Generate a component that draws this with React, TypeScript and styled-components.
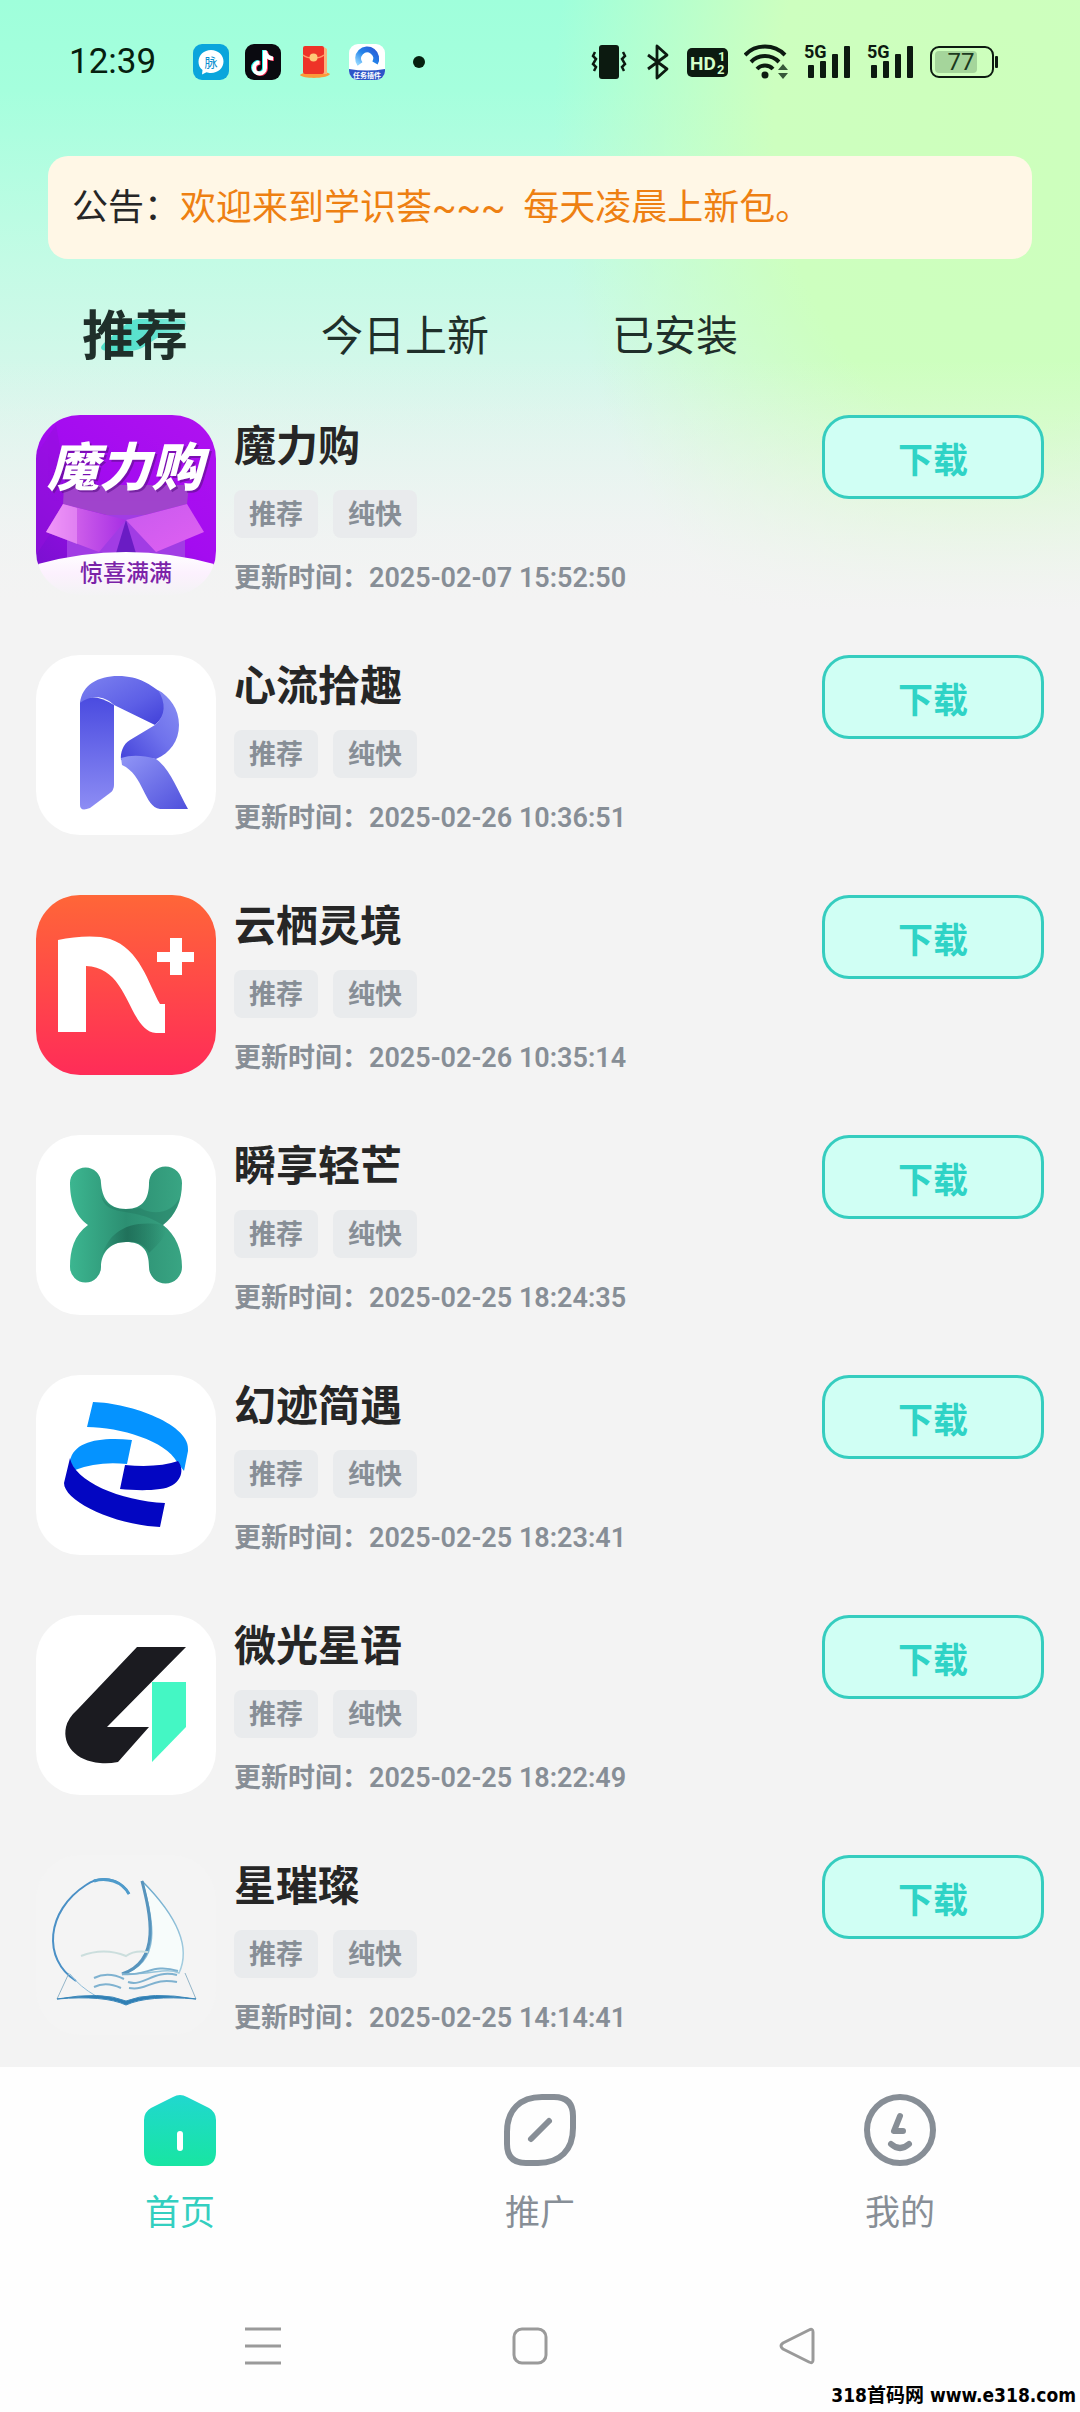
import React, { useState } from "react";
import styled, { createGlobalStyle } from "styled-components";

const GlobalStyle = createGlobalStyle`
  *, *::before, *::after { box-sizing: border-box; }
  body {
    margin: 0;
    background: #f3f3f3;
    font-family: Roboto, "Noto Sans CJK SC", sans-serif;
    color: #262626;
  }
  button { font-family: inherit; padding: 0; border: 0; background: none; color: inherit; cursor: pointer; }
  a { color: inherit; text-decoration: none; }
  svg { display: block; }
`;

const Screen = styled.div`
  position: relative;
  min-height: 100vh;
  display: flex;
  flex-direction: column;
  background:
    linear-gradient(180deg, rgba(243, 243, 243, 0) 0, rgba(243, 243, 243, 0) 360px, rgba(243, 243, 243, 0.4) 470px, #f3f3f3 610px),
    radial-gradient(ellipse 440px 620px at 92% 120px, #cdffbc 0, #cdffbf 50%, rgba(205, 255, 200, 0) 100%),
    linear-gradient(180deg, #9fffdb 0, #a5ffdd 90px, #c3fbe5 260px, #d6f7eb 390px, #f3f3f3 600px);
`;

/* ---------- status bar ---------- */

const StatusBar = styled.header`
  display: flex;
  align-items: center;
  justify-content: space-between;
  height: 124px;
  padding: 0 82px 0 69px;
  color: #06200f;
`;

const StatusGroup = styled.div`
  display: flex;
  align-items: center;
  gap: 16px;
`;

const Clock = styled.time`
  margin-right: 21px;
  font-size: 35px;
  line-height: 40px;
`;

/* ---------- notice ---------- */

const Notice = styled.section`
  display: flex;
  align-items: center;
  margin: 32px 48px 0;
  padding: 0 24px;
  height: 103px;
  border-radius: 20px;
  background: #fff7e6;
  font-size: 36px;
  line-height: 48px;
`;

const NoticeText = styled.span`
  color: #ee8012;
  white-space: pre;
`;

/* ---------- category tabs ---------- */

const Tabs = styled.div`
  display: grid;
  grid-template-columns: repeat(4, 1fr);
  height: 156px;
  align-items: center;
`;

const Tab = styled.button<{ $active: boolean }>`
  justify-self: center;
  position: relative;
  z-index: 0;
  line-height: 72px;
  font-size: ${(p) => (p.$active ? 53 : 42)}px;
  font-weight: ${(p) => (p.$active ? 700 : 400)};
  color: #1f2f2a;
`;

const TabMark = styled.svg`
  position: absolute;
  z-index: -1;
  right: 0;
  top: 18px;
`;

/* ---------- app list ---------- */

const List = styled.ul`
  flex: 1;
  display: flex;
  flex-direction: column;
  gap: 60px;
  margin: 0;
  padding: 0 36px 32px;
  list-style: none;
`;

const Item = styled.li`
  display: flex;
  align-items: flex-start;
`;

const AppIcon = styled.div<{ $bg: string }>`
  flex: none;
  width: 180px;
  height: 180px;
  border-radius: 44px;
  overflow: hidden;
  background: ${(p) => p.$bg};
`;

const Info = styled.div`
  flex: 1;
  margin-left: 18px;
`;

const Title = styled.h2`
  margin: 0;
  font-size: 42px;
  line-height: 64px;
  font-weight: 700;
`;

const Tags = styled.div`
  display: flex;
  gap: 15px;
  margin-top: 11px;
`;

const Tag = styled.span`
  padding: 2px 15px 0;
  border-radius: 8px;
  background: #e9ebed;
  color: #878e96;
  font-size: 27px;
  line-height: 46px;
  font-weight: 700;
`;

const Updated = styled.p`
  margin: 24px 0 0;
  color: #878e96;
  font-size: 27px;
  line-height: 32px;
  font-weight: 600;
`;

const Download = styled.button`
  flex: none;
  width: 222px;
  height: 84px;
  border: 3px solid #35cdbf;
  border-radius: 27px;
  background: #d0fff4;
  color: #2fd3c6;
  font-size: 35px;
  font-weight: 700;
`;

/* ---------- bottom ---------- */

const Bottom = styled.footer`
  background: #fefefe;
`;

const NavBar = styled.nav`
  display: grid;
  grid-template-columns: repeat(3, 1fr);
  height: 200px;
  padding-top: 27px;
`;

const NavLink = styled.a<{ $active?: boolean }>`
  display: flex;
  flex-direction: column;
  align-items: center;
  gap: 24px;
  font-size: 35px;
  line-height: 48px;
  color: ${(p) => (p.$active ? "#33cfc0" : "#878e96")};
`;

const SystemKeys = styled.div`
  display: grid;
  grid-template-columns: repeat(3, 1fr);
  justify-items: center;
  align-items: center;
  height: 145px;
  padding: 12px 149px 0 129px;
`;

const SiteMark = styled.a`
  position: absolute;
  right: 4px;
  bottom: 5px;
  font-family: "DejaVu Sans Condensed", "DejaVu Sans", "Noto Sans CJK SC", sans-serif;
  font-size: 19px;
  line-height: 24px;
  font-weight: 700;
  && { color: #000; }
`;

/* ---------- status icons ---------- */

const ChatApp = () => (
  <svg width="36" height="36" viewBox="0 0 36 36">
    <rect width="36" height="36" rx="9" fill="#0aa5dc" />
    <path d="M18 6c7 0 12.500 5 12.500 11.500S25 29 18 29c-2 0-3-.2-4.500-.7L9 30.500l.5-4.500C6.500 24 5.500 21 5.500 17.500 5.500 11 11 6 18 6z" fill="#fff" />
    <text x="18" y="23" textAnchor="middle" fontSize="13" fill="#0a8fd0">脉</text>
  </svg>
);

const MusicApp = () => (
  <svg width="36" height="36" viewBox="0 0 36 36">
    <rect width="36" height="36" rx="9" fill="#0a0a10" />
    <g fill="none" strokeWidth="4">
      <path d="M19 6v17.500a5.500 5.500 0 1 1-5.500-5.500M19 7c1 4.500 4 7 8 7" stroke="#25f4ee" />
      <path d="M21 7v17.500a5.500 5.500 0 1 1-5.500-5.500M21 8c1 4.500 4 7 8 7" stroke="#fe2c55" />
      <path d="M20 6.500V24a5.500 5.500 0 1 1-5.500-5.500M20 7.500c1 4.500 4 7 8 7" stroke="#fff" />
    </g>
  </svg>
);

const EnvelopeApp = () => (
  <svg width="36" height="36" viewBox="0 0 36 36">
    <path d="M3 31c3-4 26-5 30-1-3 5-27 5-30 1z" fill="#fb9a3a" />
    <path d="M27 3l3 2v25h-4z" fill="#fbb27a" />
    <rect x="6" y="2" width="21" height="28" rx="2" fill="#ee3328" />
    <path d="M6 11c5 4 16 4 21 0" fill="none" stroke="#ff9a6a" strokeWidth="1.500" />
    <circle cx="16.500" cy="13.500" r="4" fill="#ffc878" />
  </svg>
);

const CloudApp = () => (
  <svg width="36" height="36" viewBox="0 0 36 36">
    <defs>
      <linearGradient id="arch" x1="0" x2="1" y1="1" y2="0">
        <stop offset="0" stopColor="#8fd4ff" />
        <stop offset=".5" stopColor="#2484ea" />
        <stop offset="1" stopColor="#2a5bd6" />
      </linearGradient>
      <clipPath id="cloudClip"><rect width="36" height="36" rx="9" /></clipPath>
    </defs>
    <g clipPath="url(#cloudClip)">
      <rect width="36" height="36" fill="#fff" />
      <path d="M11 20a9 9 0 1 1 15-1" fill="none" stroke="url(#arch)" strokeWidth="6" />
      <path d="M0 25Q18 28 36 25V36H0z" fill="#2c55c8" />
      <text x="18" y="34" textAnchor="middle" fontSize="7" fontWeight="700" fill="#fff">任务插件</text>
    </g>
  </svg>
);

const MoreDot = styled.span`
  width: 12px;
  height: 12px;
  margin-left: 12px;
  border-radius: 50%;
  background: #06200f;
`;

const Vibrate = () => (
  <svg width="36" height="36" viewBox="0 0 36 36">
    <rect x="8" y="1" width="20" height="34" rx="3" fill="#0c1a10" />
    <path d="M4 8L2 12l3 3-3 5 3 3-2 4M32 8l2 4-3 3 3 5-3 3 2 4" fill="none" stroke="#0c1a10" strokeWidth="2.500" />
  </svg>
);

const Bluetooth = () => (
  <svg width="28" height="36" viewBox="-4 0 28 36">
    <path d="M1 11l19 14-10 9V2l10 9L1 25" fill="none" stroke="#0c1a10" strokeWidth="2.800" strokeLinejoin="round" />
  </svg>
);

const HdBadge = () => (
  <svg width="41" height="36" viewBox="0 0 41 36">
    <rect y="4" width="41" height="29" rx="5" fill="#0c1a10" />
    <g fill="#d3ffc9" fontWeight="700">
      <text x="3" y="26" fontSize="19">HD</text>
      <text x="31" y="17" fontSize="13">1</text>
      <text x="30" y="30" fontSize="13">2</text>
    </g>
  </svg>
);

const Wifi = () => (
  <svg width="44" height="36" viewBox="0 0 44 36">
    <g fill="none" stroke="#0c1a10" strokeWidth="4">
      <path d="M1 11a28 28 0 0 1 40 0" />
      <path d="M7 18a19.500 19.500 0 0 1 28 0" />
      <path d="M13 25a11 11 0 0 1 16 0" />
    </g>
    <circle cx="21" cy="31" r="3.500" fill="#0c1a10" />
    <path d="M34 26l5-6 5 6zM34 29l5 6 5-6z" fill="#37583a" />
  </svg>
);

const Signal = () => (
  <svg width="47" height="42" viewBox="0 -3 47 42">
    <text x="0" y="14" fontSize="18" fontWeight="700" fill="#0c1a10">5G</text>
    <g fill="#0c1a10">
      <rect x="4" y="21" width="6" height="13" rx="1" />
      <rect x="16" y="17" width="6" height="17" rx="1" />
      <rect x="28" y="10" width="6" height="24" rx="1" />
      <rect x="40" y="2" width="6" height="32" rx="1" />
    </g>
  </svg>
);

const Battery = () => (
  <svg width="68" height="36" viewBox="0 0 68 36">
    <rect x="1" y="3" width="62" height="30" rx="8" fill="none" stroke="#0c1a10" strokeWidth="2" />
    <rect x="5" y="7" width="42" height="22" rx="4" fill="#a5d59b" />
    <rect x="65" y="12" width="3" height="12" rx="1" fill="#0c1a10" />
    <text x="31" y="26" textAnchor="middle" fontSize="24" fill="#1c3a20">77</text>
  </svg>
);

/* ---------- app artwork ---------- */

const MagicBox = () => (
  <svg width="180" height="180" viewBox="0 0 180 180">
    <defs>
      <linearGradient id="mbBg" x1="0" x2="1" y1="1" y2="0">
        <stop offset="0" stopColor="#7a10d0" />
        <stop offset=".5" stopColor="#a40cf0" />
        <stop offset="1" stopColor="#b012f0" />
      </linearGradient>
      <linearGradient id="mbFlapL" x1="0" x2="1" y1="0" y2="0">
        <stop offset="0" stopColor="#ee8af8" />
        <stop offset=".35" stopColor="#cf60ea" />
        <stop offset="1" stopColor="#a72fe4" />
      </linearGradient>
      <linearGradient id="mbFlapR" x1="0" x2="1" y1="0" y2="1">
        <stop offset="0" stopColor="#c85aee" />
        <stop offset="1" stopColor="#e060f2" />
      </linearGradient>
      <linearGradient id="mbFoot" x1="0" x2="0" y1="0" y2="1">
        <stop offset="0" stopColor="#ffffff" />
        <stop offset=".5" stopColor="#fcf1fe" />
        <stop offset="1" stopColor="#f3f3f4" />
      </linearGradient>
    </defs>
    <rect width="180" height="150" fill="url(#mbBg)" />
    <path d="M0 40l20-30 14 80L0 140z" fill="#9410dc" opacity=".5" />
    <path d="M28 70h125l-2 19-61 16-63-16z" fill="#a044cc" />
    <path d="M31 100h118v50H31z" fill="#a13ce4" />
    <path d="M90 105l-12 40h24z" fill="#6a1cc4" />
    <path d="M27 89l63 16-27 32-53-20z" fill="url(#mbFlapL)" />
    <path d="M27 89l14 4v36l-31-12z" fill="#f4a4fa" opacity=".5" />
    <path d="M151 89l-61 16 30 32 48-20z" fill="url(#mbFlapR)" />
    <path d="M-2 150Q90 124 182 150V180H-2z" fill="url(#mbFoot)" />
    <text x="91" y="73" textAnchor="middle" fontSize="52" fontWeight="900" fontStyle="italic" fill="#5c1088" opacity=".6">魔力购</text>
    <text x="89" y="71" textAnchor="middle" fontSize="52" fontWeight="900" fontStyle="italic" fill="#fff">魔力购</text>
    <text x="90" y="166" textAnchor="middle" fontSize="23" fontWeight="500" fill="#7a22a8">惊喜满满</text>
  </svg>
);

const RibbonR = () => (
  <svg width="180" height="180" viewBox="0 0 180 180">
    <defs>
      <linearGradient id="rStem" x1="0" x2="0" y1="0" y2="1">
        <stop offset="0" stopColor="#4a4be0" />
        <stop offset="1" stopColor="#8d8df4" />
      </linearGradient>
      <linearGradient id="rTop" x1="0" x2="1" y1="0" y2="1">
        <stop offset="0" stopColor="#7d82f0" />
        <stop offset=".6" stopColor="#5d5fe6" />
        <stop offset="1" stopColor="#3f3ed8" />
      </linearGradient>
      <linearGradient id="rSide" x1="1" x2="0" y1="0" y2="1">
        <stop offset="0" stopColor="#8a90f4" />
        <stop offset=".5" stopColor="#6f72ec" />
        <stop offset="1" stopColor="#4342da" />
      </linearGradient>
      <linearGradient id="rLeg" x1="0" x2="1" y1="0" y2="1">
        <stop offset="0" stopColor="#9196f6" />
        <stop offset="1" stopColor="#4f50dc" />
      </linearGradient>
    </defs>
    <path d="M44 47Q56 36 78 50V130Q78 135 74 138L54 153Q44 157 44 150z" fill="url(#rStem)" />
    <path d="M44 48C46 30 62 21 82 21C104 21 114 30 126 38C134 48 130 60 119 70L78 50C68 40 54 40 44 48z" fill="url(#rTop)" />
    <path d="M122 35C134 42 143 54 143 70C143 86 134 98 120 104Q100 100 85 105C84 98 87 89 94 85L119 70C130 60 130 48 122 35z" fill="url(#rSide)" />
    <path d="M85 103Q100 98 120 104C134 114 141 134 152 154H124C108 152 108 120 86 110z" fill="url(#rLeg)" />
  </svg>
);

const NPlus = () => (
  <svg width="180" height="180" viewBox="0 0 180 180">
    <path d="M22 45C40 41 62 40 74 44C104 54 112 88 124 109H129V138H120C92 136 94 72 50 71V137H22z" fill="#fff" />
    <path d="M134 43h12v14h12v10h-12v13h-12V67h-13V57h13z" fill="#fff" />
  </svg>
);

const KnotX = () => (
  <svg width="180" height="180" viewBox="0 0 180 180">
    <defs>
      <linearGradient id="xBase" x1="0" x2="1" y1="0" y2="0">
        <stop offset="0" stopColor="#3cb690" />
        <stop offset=".5" stopColor="#2c8f72" />
        <stop offset="1" stopColor="#39a583" />
      </linearGradient>
      <linearGradient id="xShade" x1="0" x2="1" y1="0" y2="0">
        <stop offset="0" stopColor="#1d6a55" stopOpacity="0.1" />
        <stop offset=".4" stopColor="#1d6a55" stopOpacity=".8" />
        <stop offset="1" stopColor="#1d6a55" stopOpacity="0" />
      </linearGradient>
    </defs>
    <path d="M34 48a15.500 15.500 0 0 1 31 0C66 62 72 74 90 74S113 62 113 48a16.500 16.500 0 0 1 33 0C146 66 140 80 127 90C140 100 146 115 146 132a16.500 16.500 0 0 1-33 0C113 115 106 107 90 107S65 118 65 132a15.500 15.500 0 0 1-31 0C34 115 38 100 52 90C38 80 34 64 34 48z" fill="url(#xBase)" />
    <path d="M66 121C72 98 92 84 127 90C134 96 128 104 113 118C108 108 98 106 90 107C80 107 72 110 66 121z" fill="url(#xShade)" />
    <path d="M65 60C70 84 96 70 127 90C136 84 142 72 144 62C138 76 120 82 104 73C84 76 72 74 65 60z" fill="#1d6a55" opacity=".3" />
  </svg>
);

const Orbit = () => (
  <svg width="180" height="180" viewBox="0 0 180 180">
    <path d="M57 27C95 28 156 50 152 76L148 96L141 87C130 66 84 52 51 52z" fill="#0593ff" />
    <path d="M96 65L91 89Q62 86 39 95L34 86C38 66 64 62 96 65z" fill="#0593ff" />
    <path d="M89 90Q122 93 142 86C150 96 144 112 124 114C110 116 96 115 84 114z" fill="#0306c2" />
    <path d="M34 83C38 106 84 126 129 128L124 152C78 150 28 126 28 108z" fill="#0306c2" />
  </svg>
);

const LetterFour = () => (
  <svg width="180" height="180" viewBox="0 0 180 180">
    <path d="M101 32H150L71 112H113L82 147Q72 149 64 148C40 146 26 130 30 112Q32 103 42 94z" fill="#1b1b20" />
    <path d="M116 67H150V112L116 147z" fill="#44f7c4" />
  </svg>
);

const Sailboat = () => (
  <svg width="180" height="180" viewBox="0 0 180 180">
    <defs>
      <linearGradient id="sail" x1="0" x2="1" y1="0" y2="1">
        <stop offset="0" stopColor="#5a9fc8" />
        <stop offset="1" stopColor="#a8cfe0" />
      </linearGradient>
    </defs>
    <path d="M106 26C130 50 158 86 143 118C130 112 116 120 86 119C126 108 118 66 106 26z" fill="#f7fcfb" stroke="url(#sail)" strokeWidth="1.500" />
    <path d="M93 39C84 22 64 20 50 30C10 56 6 104 40 126" fill="none" stroke="#4a90c6" strokeWidth="2" />
    <path d="M93 39C86 26 70 22 58 26" fill="none" stroke="#4f9bcb" strokeWidth="3" />
    <path d="M34 119Q44 132 60 141" fill="none" stroke="#8fbdd8" />
    <path d="M106 26C114 58 126 106 86 119" fill="none" stroke="#5794bd" strokeWidth="3" />
    <path d="M45 101Q68 92 90 101Q98 95 112 97" fill="none" stroke="#cbdedd" strokeWidth="2" />
    <path d="M86 119C110 122 116 108 142 116M58 123Q72 116 88 124M92 127C108 132 118 114 141 120M58 132Q70 126 85 133M93 133C112 136 116 122 141 127" fill="none" stroke="#7fb2d0" strokeWidth="2" />
    <path d="M33 118L21 144M149 118L160 144" fill="none" stroke="#94b5c8" />
    <path d="M21 144Q66 136 90 146Q114 136 160 144Q112 140 90 150Q68 140 21 144z" fill="#2f7fb4" stroke="#3d88ba" />
  </svg>
);

/* ---------- navigation icons ---------- */

const HomeIcon = () => (
  <svg width="72" height="72" viewBox="0 0 72 72">
    <defs>
      <linearGradient id="home" x1="0" x2="0" y1="0" y2="1">
        <stop offset="0" stopColor="#20d8cf" />
        <stop offset="1" stopColor="#18e5a2" />
      </linearGradient>
    </defs>
    <path d="M29 3Q36-1 43 3L65 14Q72 18 72 26V58Q72 72 58 72H14Q0 72 0 58V26Q0 18 7 14z" fill="url(#home)" />
    <rect x="33" y="37" width="6" height="20" rx="3" fill="#fff" />
  </svg>
);

const PromoteIcon = () => (
  <svg width="72" height="72" viewBox="0 0 72 72" fill="none" stroke="#878e96">
    <path d="M38 3H50Q69 3 69 22V34C69 56 56 69 34 69H22Q3 69 3 50V38C3 16 16 3 38 3z" strokeWidth="6" />
    <path d="M27 45L45 27" strokeWidth="6" strokeLinecap="round" />
  </svg>
);

const ProfileIcon = () => (
  <svg width="72" height="72" viewBox="0 0 72 72" fill="none" stroke="#878e96" strokeWidth="6">
    <circle cx="36" cy="36" r="33" />
    <path d="M36 22L30 37H39" strokeLinecap="round" strokeLinejoin="round" />
    <path d="M27 50Q36 58 45 50" strokeLinecap="round" />
  </svg>
);

const apps = [
  { name: "魔力购", time: "2025-02-07 15:52:50", bg: "#f3f3f4", Art: MagicBox },
  { name: "心流拾趣", time: "2025-02-26 10:36:51", bg: "#fff", Art: RibbonR },
  { name: "云栖灵境", time: "2025-02-26 10:35:14", bg: "linear-gradient(#ff6638, #ff2c58)", Art: NPlus },
  { name: "瞬享轻芒", time: "2025-02-25 18:24:35", bg: "#fff", Art: KnotX },
  { name: "幻迹简遇", time: "2025-02-25 18:23:41", bg: "#fff", Art: Orbit },
  { name: "微光星语", time: "2025-02-25 18:22:49", bg: "#fff", Art: LetterFour },
  { name: "星璀璨", time: "2025-02-25 14:14:41", bg: "#f4f4f4", Art: Sailboat },
];

const tabs = ["推荐", "今日上新", "已安装"];

export default function App() {
  const [active, setActive] = useState(0);
  return (
    <Screen lang="zh-CN">
      <GlobalStyle />
      <StatusBar>
        <StatusGroup>
          <Clock>12:39</Clock>
          <ChatApp />
          <MusicApp />
          <EnvelopeApp />
          <CloudApp />
          <MoreDot />
        </StatusGroup>
        <StatusGroup>
          <Vibrate />
          <Bluetooth />
          <HdBadge />
          <Wifi />
          <Signal />
          <Signal />
          <Battery />
        </StatusGroup>
      </StatusBar>

      <Notice>
        <span>公告：</span>
        <NoticeText>欢迎来到学识荟~~~  每天凌晨上新包。</NoticeText>
      </Notice>

      <Tabs>
        {tabs.map((label, i) => (
          <Tab key={label} type="button" $active={i === active} onClick={() => setActive(i)}>
            {i === active && (
              <TabMark width="90" height="34" viewBox="0 0 90 34" aria-hidden="true">
                <defs>
                  <linearGradient id="mark" x1="0" x2="1" y1="0" y2="0">
                    <stop offset="0" stopColor="#4fe0ca" />
                    <stop offset=".6" stopColor="#5fe2cf" />
                    <stop offset="1" stopColor="#8aeedb" />
                  </linearGradient>
                </defs>
                <path d="M12 32Q-2 32 6 24L28 5Q34 0 42 0H82Q92 2 86 10Q80 17 70 17H62L44 29Q38 32 30 32z" fill="url(#mark)" />
              </TabMark>
            )}
            {label}
          </Tab>
        ))}
      </Tabs>

      <List>
        {apps.map(({ name, time, bg, Art }) => (
          <Item key={name}>
            <AppIcon $bg={bg}><Art /></AppIcon>
            <Info>
              <Title>{name}</Title>
              <Tags>
                <Tag>推荐</Tag>
                <Tag>纯快</Tag>
              </Tags>
              <Updated>更新时间：{time}</Updated>
            </Info>
            <Download type="button">下载</Download>
          </Item>
        ))}
      </List>

      <Bottom>
        <NavBar>
          <NavLink href="#home" $active><HomeIcon />首页</NavLink>
          <NavLink href="#promote"><PromoteIcon />推广</NavLink>
          <NavLink href="#me"><ProfileIcon />我的</NavLink>
        </NavBar>
        <SystemKeys>
          <button type="button" aria-label="菜单">
            <svg width="36" height="38" viewBox="0 0 36 38" stroke="#9a9a9a" strokeWidth="3">
              <path d="M0 2H36M0 19H36M0 36H36" />
            </svg>
          </button>
          <button type="button" aria-label="主屏幕">
            <svg width="36" height="38" viewBox="0 0 36 38" fill="none" stroke="#9a9a9a" strokeWidth="3">
              <rect x="2" y="2" width="32" height="34" rx="8" />
            </svg>
          </button>
          <button type="button" aria-label="返回">
            <svg width="36" height="38" viewBox="0 0 36 38" fill="none" stroke="#9a9a9a" strokeWidth="3" strokeLinejoin="round">
              <path d="M30 3Q34 1 34 5V33Q34 37 30 35L4 22Q0 19 4 16z" />
            </svg>
          </button>
        </SystemKeys>
      </Bottom>
      <SiteMark href="#site">318首码网 www.e318.com</SiteMark>
    </Screen>
  );
}
